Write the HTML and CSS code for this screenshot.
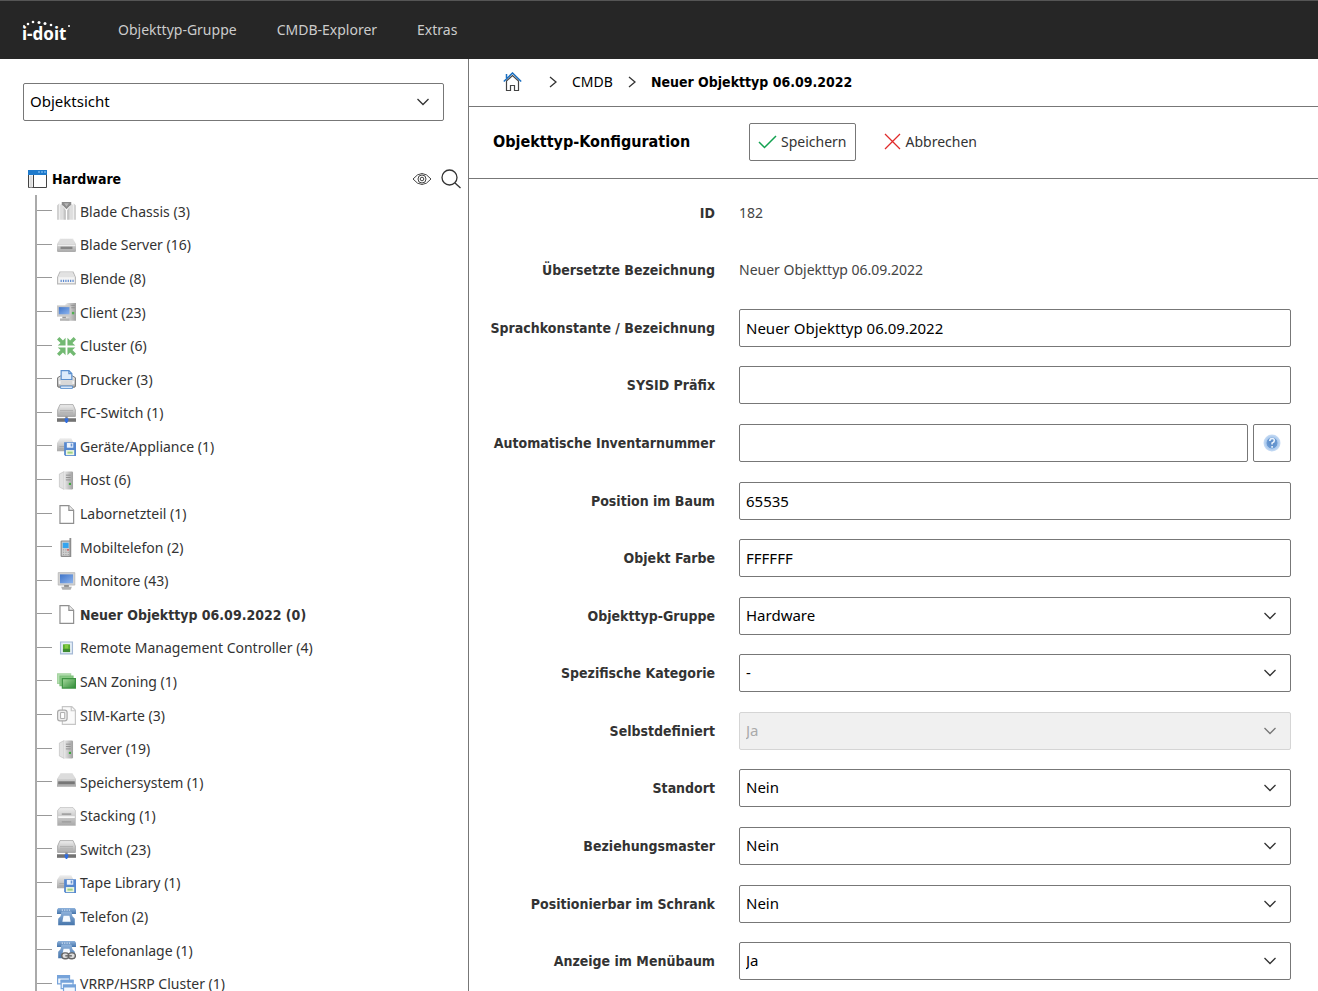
FILE: index.html
```html
<!DOCTYPE html>
<html lang="de">
<head>
    <meta charset="UTF-8">
    <meta name="viewport" content="width=device-width, initial-scale=1.0">
    <title>i-doit - Objekttyp-Konfiguration</title>
    <link rel="stylesheet" href="styles.css">
</head>
<body>
    <!-- icon sprite -->
    <svg class="sprite" width="0" height="0" aria-hidden="true">
        <defs>
            <linearGradient id="g-grey" x1="0" y1="0" x2="0" y2="1"><stop offset="0" stop-color="#efefef"/><stop offset="1" stop-color="#a9a9a9"/></linearGradient>
            <linearGradient id="g-side" x1="0" y1="0" x2="1" y2="0"><stop offset="0" stop-color="#e8e8e8"/><stop offset="1" stop-color="#a0a0a0"/></linearGradient>
            <linearGradient id="g-blue" x1="0" y1="0" x2="1" y2="1"><stop offset="0" stop-color="#3f74c8"/><stop offset="1" stop-color="#8db4ee"/></linearGradient>
            <linearGradient id="g-phone" x1="0" y1="0" x2="0" y2="1"><stop offset="0" stop-color="#8fb3dc"/><stop offset="1" stop-color="#4675ab"/></linearGradient>
            <linearGradient id="g-green" x1="0" y1="0" x2="1" y2="1"><stop offset="0" stop-color="#a9dba0"/><stop offset="1" stop-color="#2e8b35"/></linearGradient>
            <radialGradient id="g-help"><stop offset="0" stop-color="#5687c4"/><stop offset=".6" stop-color="#6c9bd4"/><stop offset=".68" stop-color="#a9c8ec"/><stop offset="1" stop-color="#c9ddf5"/></radialGradient>
        </defs>
        <symbol id="i-chassis" viewBox="0 0 16 16">
            <path d="M0 3l2-2v14H0zM14 1l2 2v12h-2z" fill="#d2d2d2"/>
            <path d="M2.600 2H5v13H2.600zM11 2h2.400v13H11z" fill="#dedede"/>
            <path d="M5.300 4l2.200 3v8H5.300zM10.700 4L8.500 7v8h2.200z" fill="#c4c4c4"/>
            <path d="M4 0h8v2L8 6 4 2z" fill="#8b8b8b"/><path d="M6 1h4L8 4z" fill="#b5b5b5"/>
        </symbol>
        <symbol id="i-blade" viewBox="0 0 16 16">
            <path d="M2.500 2h11L16 7v5.500a1 1 0 0 1-1 1H1a1 1 0 0 1-1-1V7z" fill="url(#g-grey)"/>
            <path d="M3 2.500h10L15 7H1z" fill="#dedede"/><path d="M.5 7.500h15v1H.5z" fill="#eee"/><path d="M3 9h10v2H3z" fill="#858585"/>
        </symbol>
        <symbol id="i-panel" viewBox="0 0 16 16">
            <path d="M2.500 2.500h11L15.500 7v5.500h-15V7z" fill="#f4f4f4" stroke="#b9b9b9"/>
            <path d="M3 3h10l2 4H1z" fill="#e2e2e2"/>
            <path d="M3 10h11" stroke="#5a88cf" stroke-width="2" stroke-dasharray="1 1"/>
        </symbol>
        <symbol id="i-client" viewBox="0 0 16 16">
            <path d="M7 1l2-1h7v15H7z" fill="url(#g-side)"/><path d="M11 2h4M11 4h4" stroke="#888" stroke-width=".7"/><path d="M12.500 7.500h2v2h-2z" fill="#52b052"/>
            <path d="M0 2h12v9.500H0z" fill="#c9c9c9"/><path d="M1.500 3.500h9v6h-9z" fill="url(#g-blue)"/><path d="M4.500 11.500h3V13h-3z" fill="#999"/><path d="M2.500 13h8v2h-8z" fill="#b4b4b4"/>
        </symbol>
        <symbol id="i-cluster" viewBox="0 0 16 16">
            <path id="arrow-in" d="M2 0l3 3L7.200.6V7.200H.6L3 5 0 2z" fill="#72b972"/>
            <use href="#arrow-in" transform="matrix(-1 0 0 1 16 0)"/><use href="#arrow-in" transform="matrix(1 0 0 -1 0 16)"/><use href="#arrow-in" transform="matrix(-1 0 0 -1 16 16)"/>
        </symbol>
        <symbol id="i-printer" viewBox="0 0 16 16">
            <path d="M.5 6.500L3 5h10l2.500 1.500v7a1 1 0 0 1-1 1h-13a1 1 0 0 1-1-1z" fill="url(#g-grey)" stroke="#6d6d6d" stroke-width=".8"/>
            <path d="M3.500.5h6.500L12.500 3v5h-9z" fill="#dcebfb" stroke="#5a8fce"/><path d="M10 .5V3h2.500" fill="none" stroke="#5a8fce"/>
            <path d="M1.500 10.500h13" stroke="#f3f3f3" stroke-width="3"/><path d="M3 9h10v3.500H3z" fill="#d8d8d8"/><path d="M3 13.500h10v2H3z" fill="#e4f0fd" stroke="#5a8fce" stroke-width=".8"/>
        </symbol>
        <symbol id="i-switch" viewBox="0 0 16 16">
            <path d="M2.500.5h11L15.500 5v5.500H.5V5z" fill="url(#g-grey)" stroke="#999" stroke-width=".6"/><path d="M2.500 5.500h11M2.500 7.500h11" stroke="#b2b2b2"/>
            <path d="M0 12h16v3H0z" fill="#737373"/><path d="M7 10.500h2V12H7z" fill="#888"/><path d="M6.500 12h3v2l-1 2h-1l-1-2z" fill="#2f6de0"/>
        </symbol>
        <symbol id="i-floppy" viewBox="0 0 16 16">
            <path d="M2.500 1h9.500L14 5v7H0V5z" fill="url(#g-grey)"/><path d="M2 8h4M2 10h4" stroke="#aaa"/>
            <path d="M6 4.500h10V16H7l-1-1z" fill="#5587cf"/><path d="M8.300 5h5.400v4H8.300z" fill="#eef4fc"/><path d="M11.500 5.500h1.400V8h-1.400z" fill="#6a96d4"/><path d="M7.500 11h7v4.300h-7z" fill="#eef7df"/><path d="M8.800 12.300h4.400V14H8.800z" fill="#9fd084"/>
        </symbol>
        <symbol id="i-tower" viewBox="0 0 16 16">
            <path d="M2 2.500L6 .5v15L2 13.500z" fill="#e2e2e2" stroke="#c3c3c3" stroke-width=".6"/><path d="M6 .5h6.500a1 1 0 0 1 1 1v13a1 1 0 0 1-1 1H6z" fill="url(#g-side)"/>
            <path d="M7.500 3.500h4M7.500 5.500h4M7.500 7.500h4" stroke="#8d8d8d" stroke-width=".8"/><path d="M10 10h1.800v1.800H10z" fill="#3fa63f"/>
        </symbol>
        <symbol id="i-page" viewBox="0 0 16 16">
            <path d="M2.500.500h7.500l4 4v11H2.500z" fill="#fff" stroke="#8f8f8f"/><path d="M10 .5v4h4" fill="#eee" stroke="#8f8f8f"/>
        </symbol>
        <symbol id="i-mobile" viewBox="0 0 16 16">
            <path d="M10.500 0H12v16H4a1 1 0 0 1-1-1V3a1 1 0 0 1 1-1h6.500z" fill="#8d8d8d"/><path d="M4 3h6.500v12H4z" fill="#d0d0d0"/><path d="M4.800 4h5v4.500h-5z" fill="#35a4ee"/><path d="M5 10h5M5 12h5M5 14h5" stroke="#999" stroke-width=".8" stroke-dasharray="1 1"/><path d="M8.500 9.500h1.500v1H8.500z" fill="#d44"/>
        </symbol>
        <symbol id="i-monitor" viewBox="0 0 16 16">
            <path d="M1 .5h14v10.500H1z" fill="#d2d2d2" stroke="#b2b2b2" stroke-width=".6"/><path d="M2.500 2h11v7.500h-11z" fill="url(#g-blue)"/><path d="M6 11h4v2H6z" fill="#8c8c8c"/><path d="M3.500 12.500h9l-1 2.500h-7z" fill="#b2b2b2"/>
        </symbol>
        <symbol id="i-remote" viewBox="0 0 16 16">
            <path d="M3 2.500h10v10H3z" fill="#e8f0fa" stroke="#a4b8d4"/><path d="M5 4.500h6v6.500H5z" fill="#58ab2f"/><path d="M5 8.500h6V11H5z" fill="#3d8a30"/><path d="M6.500 4.500h3V8h-3z" fill="#83cb44"/>
        </symbol>
        <symbol id="i-zoning" viewBox="0 0 16 16">
            <path d="M.5 1.500h11v8H.5z" fill="#b9e1b5" stroke="#a6d4a2"/><path d="M2.500 3.500h11v8h-11z" fill="#8bca86" stroke="#7cc07a"/><path d="M4.500 5.500h11v8h-11z" fill="url(#g-green)" stroke="#3c9241"/>
        </symbol>
        <symbol id="i-sim" viewBox="0 0 16 16">
            <path d="M4.500.5h8l3 3v12h-11z" fill="#fafafa" stroke="#c6c6c6"/><path d="M12 .5V4h3.500" fill="none" stroke="#c6c6c6"/><rect x=".5" y="3.500" width="8" height="9" rx="2" fill="#eee" stroke="#aaa"/><path d="M3 5.500h3.500v5H3z" fill="#fff" stroke="#aaa" stroke-width=".8"/>
        </symbol>
        <symbol id="i-storage" viewBox="0 0 16 16">
            <path d="M3 0h10l3 5v6.500H0V5z" fill="url(#g-grey)"/><path d="M3 .5h10L15 5H1z" fill="#dcdcdc"/><path d="M1 7h14v2.500H1z" fill="#777"/>
        </symbol>
        <symbol id="i-stack" viewBox="0 0 16 16">
            <path d="M2.500.5h11L15.500 3v12.500H.5V3z" fill="url(#g-grey)" stroke="#bbb" stroke-width=".6"/><path d="M1 8.500h14" stroke="#f8f8f8" stroke-width="1.500"/><path d="M4 6h8M4 12.500h8" stroke="#a2a2a2" stroke-width="1.500"/>
        </symbol>
        <symbol id="i-phone" viewBox="0 0 16 16">
            <path d="M1 0h14l1 1.500V5h-4V3.500H4V5H0V1.500z" fill="url(#g-phone)"/><path d="M4 3h8l1 4 2 2v5.500H1V9l2-2z" fill="url(#g-phone)"/><path d="M4 1.800h8" stroke="#d3e3f5" stroke-dasharray="1 1"/><path d="M5.500 6.500h5l1 5h-7z" fill="#f5faff"/>
        </symbol>
        <symbol id="i-pbx" viewBox="0 0 16 16">
            <use href="#i-phone" width="16" height="16"/><rect x="4" y="10" width="6" height="5" rx="2.500" fill="#ddd" stroke="#666" stroke-width="1.200"/><rect x="9.500" y="10" width="6" height="5" rx="2.500" fill="#ddd" stroke="#666" stroke-width="1.200"/><path d="M7 12.500h5.500" stroke="#666" stroke-width="1.200"/>
        </symbol>
        <symbol id="i-windows" viewBox="0 0 16 16">
            <g fill="#f3f8fe" stroke="#76a3da"><path d="M.5.500h10v7H.5z"/><path d="M3.500 4.500h10v7h-10z"/><path d="M5.500 8.500h10v7h-10z"/></g><path d="M0 0h11v3H0zM3 4h11v2.500H3zM5 8h11v2.500H5z" fill="#76a3da"/>
        </symbol>
        <symbol id="i-chevron" viewBox="0 0 8 12"><path d="M1 1l6 5-6 5" fill="none" stroke="#333" stroke-width="1.300"/></symbol>
    </svg>

    <header class="topbar">
        <a href="#" class="logo">
            <svg viewBox="0 0 50 7" fill="#fff" aria-hidden="true">
                <circle cx="2" cy="6" r="1"/><circle cx="6" cy="4" r="1.300"/><circle cx="11" cy="2" r="1.300"/><circle cx="17" cy="2.500" r="1.500"/><circle cx="23" cy="3.500" r="1.500"/><circle cx="29" cy="5" r="1.300"/><circle cx="47" cy="6" r="1"/>
            </svg>
            <span>i-doit</span>
        </a>
        <nav>
            <a href="#">Objekttyp-Gruppe</a>
            <a href="#">CMDB-Explorer</a>
            <a href="#">Extras</a>
        </nav>
    </header>

    <div class="wrapper">
        <aside class="sidebar">
            <select class="field" aria-label="Sicht"><option>Objektsicht</option></select>
            <div class="tree-head">
                <svg class="icon" viewBox="0 0 19 19" aria-hidden="true"><path d="M.5.500h18v17H.5z" fill="#fff" stroke="#444"/><path d="M0 0h19v5H0z" fill="#1f7acb"/><path d="M10 2h2M13 2h2M16 2h2" stroke="#9cd0ff"/><path d="M1.500 5.500h3v12h-3z" fill="#ddd"/><path d="M5.500 5v12.500" stroke="#444"/></svg>
                <h2>Hardware</h2>
                <button class="plain" aria-label="Anzeigen"><svg width="20" height="20" viewBox="0 0 20 20" fill="none" stroke="#444"><path d="M1 10q9-11 18 0-9 11-18 0z"/><circle cx="10" cy="10" r="4"/><circle cx="10" cy="10" r="1.800"/></svg></button>
                <button class="plain" aria-label="Suchen"><svg width="20" height="20" viewBox="0 0 20 20" fill="none" stroke="#333" stroke-width="1.300"><circle cx="8.500" cy="8.500" r="7.500"/><path d="M14 14l5.500 5"/></svg></button>
            </div>
            <ul class="tree">
                <li><a href="#"><svg class="icon"><use href="#i-chassis"/></svg>Blade Chassis (3)</a></li>
                <li><a href="#"><svg class="icon"><use href="#i-blade"/></svg>Blade Server (16)</a></li>
                <li><a href="#"><svg class="icon"><use href="#i-panel"/></svg>Blende (8)</a></li>
                <li><a href="#"><svg class="icon"><use href="#i-client"/></svg>Client (23)</a></li>
                <li><a href="#"><svg class="icon"><use href="#i-cluster"/></svg>Cluster (6)</a></li>
                <li><a href="#"><svg class="icon"><use href="#i-printer"/></svg>Drucker (3)</a></li>
                <li><a href="#"><svg class="icon"><use href="#i-switch"/></svg>FC-Switch (1)</a></li>
                <li><a href="#"><svg class="icon"><use href="#i-floppy"/></svg>Geräte/Appliance (1)</a></li>
                <li><a href="#"><svg class="icon"><use href="#i-tower"/></svg>Host (6)</a></li>
                <li><a href="#"><svg class="icon"><use href="#i-page"/></svg>Labornetzteil (1)</a></li>
                <li><a href="#"><svg class="icon"><use href="#i-mobile"/></svg>Mobiltelefon (2)</a></li>
                <li><a href="#"><svg class="icon"><use href="#i-monitor"/></svg>Monitore (43)</a></li>
                <li class="active"><a href="#"><svg class="icon"><use href="#i-page"/></svg>Neuer Objekttyp 06.09.2022 (0)</a></li>
                <li><a href="#"><svg class="icon"><use href="#i-remote"/></svg>Remote Management Controller (4)</a></li>
                <li><a href="#"><svg class="icon"><use href="#i-zoning"/></svg>SAN Zoning (1)</a></li>
                <li><a href="#"><svg class="icon"><use href="#i-sim"/></svg>SIM-Karte (3)</a></li>
                <li><a href="#"><svg class="icon"><use href="#i-tower"/></svg>Server (19)</a></li>
                <li><a href="#"><svg class="icon"><use href="#i-storage"/></svg>Speichersystem (1)</a></li>
                <li><a href="#"><svg class="icon"><use href="#i-stack"/></svg>Stacking (1)</a></li>
                <li><a href="#"><svg class="icon"><use href="#i-switch"/></svg>Switch (23)</a></li>
                <li><a href="#"><svg class="icon"><use href="#i-floppy"/></svg>Tape Library (1)</a></li>
                <li><a href="#"><svg class="icon"><use href="#i-phone"/></svg>Telefon (2)</a></li>
                <li><a href="#"><svg class="icon"><use href="#i-pbx"/></svg>Telefonanlage (1)</a></li>
                <li><a href="#"><svg class="icon"><use href="#i-windows"/></svg>VRRP/HSRP Cluster (1)</a></li>
            </ul>
        </aside>

        <main>
            <nav class="breadcrumb">
                <a href="#" class="home" aria-label="Start"><svg class="icon" viewBox="0 0 19 19" fill="none"><path d="M3.500 9v9.500h4v-5h4v5h4V9l-6-5.500z" stroke="#444" stroke-width="1.200"/><path d="M.8 9.500l8.700-8.500 8.700 8.500M3.500 6V2" stroke="#1b6fc0" stroke-width="1.500"/></svg></a>
                <svg class="sep"><use href="#i-chevron"/></svg>
                <a href="#">CMDB</a>
                <svg class="sep"><use href="#i-chevron"/></svg>
                <strong>Neuer Objekttyp 06.09.2022</strong>
            </nav>
            <div class="toolbar">
                <h1>Objekttyp-Konfiguration</h1>
                <button class="btn save"><svg class="icon" viewBox="0 0 19 19" fill="none" stroke="#12a150" stroke-width="1.500"><path d="M1 10l5.500 5.500L18 4"/></svg>Speichern</button>
                <button class="btn cancel"><svg class="icon" viewBox="0 0 19 19" fill="none" stroke="#e02b2b" stroke-width="1.300"><path d="M2 2l15 15M17 2L2 17"/></svg>Abbrechen</button>
            </div>
            <form class="form">
                <div class="row"><span class="label">ID</span><span class="value">182</span></div>
                <div class="row"><span class="label">Übersetzte Bezeichnung</span><span class="value">Neuer Objekttyp 06.09.2022</span></div>
                <div class="row"><label for="title">Sprachkonstante / Bezeichnung</label><input class="field" type="text" id="title" value="Neuer Objekttyp 06.09.2022"></div>
                <div class="row"><label for="sysid">SYSID Präfix</label><input class="field" type="text" id="sysid"></div>
                <div class="row">
                    <label for="inventory">Automatische Inventarnummer</label>
                    <div class="group">
                        <input class="field" type="text" id="inventory">
                        <button type="button" class="help" aria-label="Hilfe"><svg width="18" height="18" viewBox="0 0 18 18"><circle cx="9" cy="9" r="8.500" fill="url(#g-help)"/><path d="M6.800 7q0-2.500 2.300-2.500T11.300 6.700q0 1.300-2.200 2.300v1.500M9.100 12v1.800" fill="none" stroke="#eaf2fc" stroke-width="1.600"/></svg></button>
                    </div>
                </div>
                <div class="row"><label for="position">Position im Baum</label><input class="field" type="text" id="position" value="65535"></div>
                <div class="row"><label for="color">Objekt Farbe</label><input class="field" type="text" id="color" value="FFFFFF"></div>
                <div class="row"><label for="group">Objekttyp-Gruppe</label><select class="field" id="group"><option>Hardware</option></select></div>
                <div class="row"><label for="category">Spezifische Kategorie</label><select class="field" id="category"><option>-</option></select></div>
                <div class="row"><label for="custom">Selbstdefiniert</label><select class="field" id="custom" disabled><option>Ja</option><option>Nein</option></select></div>
                <div class="row"><label for="location">Standort</label><select class="field" id="location"><option>Nein</option><option>Ja</option></select></div>
                <div class="row"><label for="relation">Beziehungsmaster</label><select class="field" id="relation"><option>Nein</option><option>Ja</option></select></div>
                <div class="row"><label for="rack">Positionierbar im Schrank</label><select class="field" id="rack"><option>Nein</option><option>Ja</option></select></div>
                <div class="row"><label for="menu">Anzeige im Menübaum</label><select class="field" id="menu"><option>Ja</option><option>Nein</option></select></div>
            </form>
        </main>
    </div>
</body>
</html>
```
FILE: styles.css
```css
*{
    box-sizing: border-box;
}
body{
    margin: 0;
    height: 100vh;
    display: flex;
    flex-direction: column;
    overflow: hidden;
    background-color: #fff;
    color: #333;
    font-family: "Noto Sans", "Open Sans", sans-serif;
    font-size: 14px;
    line-height: 20px;
}
a{
    color: inherit;
    text-decoration: none;
}
h1, h2{
    margin: 0;
    color: #000;
}
h1, h2, strong, label, .label, .active{
    font-family: "DejaVu Sans Condensed", "Noto Sans", sans-serif;
    font-weight: bold;
}
button, input, select{
    font-family: inherit;
    font-size: 14px;
    color: inherit;
}
.sprite{
    position: absolute;
}
.icon{
    width: 19px;
    height: 19px;
    flex: none;
}

/* top bar */
.topbar{
    flex: none;
    height: 59px;
    display: flex;
    align-items: center;
    padding-left: 22px;
    background-color: #262626;
    border-top: 1px solid #555;
}
.logo{
    width: 96px;
    display: flex;
    flex-direction: column;
    color: #fff;
    font-size: 17px;
    font-weight: bold;
    line-height: 14px;
}
.logo svg{
    width: 50px;
    height: 7px;
}
.topbar nav{
    display: flex;
    gap: 40px;
    color: #ccc;
}

.wrapper{
    flex: 1;
    min-height: 0;
    display: flex;
}

/* object tree */
.sidebar{
    width: 469px;
    flex: none;
    padding-top: 24px;
    overflow: auto;
    scrollbar-width: none;
    border-right: 1px solid #777;
}
.sidebar .field{
    display: block;
    width: auto;
    min-width: 421px;
    margin-left: 23px;
}
.tree-head{
    display: flex;
    align-items: center;
    gap: 5px;
    height: 20px;
    margin: 48px 7px 6px 28px;
}
.tree-head h2{
    flex: 1;
    font-size: 14px;
}
.plain{
    display: flex;
    padding: 0;
    margin-left: 4px;
    border: none;
    background: none;
}
.tree{
    list-style: none;
    display: grid;
    grid-auto-rows: 1fr;
    min-height: 806px;
    margin: 0 0 0 35px;
    padding: 0;
    border-left: 2px solid #aaa;
}
.tree li{
    display: flex;
    align-items: center;
}
.tree li::before{
    content: "";
    width: 15px;
    border-top: 1px solid #999;
    margin: 0 5px 2px 0;
}
.tree a{
    display: flex;
    align-items: center;
    gap: 4px;
}

/* content */
main{
    flex: 1;
    min-width: 0;
    overflow: auto;
    scrollbar-width: none;
}
.breadcrumb{
    display: flex;
    align-items: center;
    height: 48px;
    padding: 0 34px 2px;
    border-bottom: 1px solid #777;
    color: #000;
}
.home{
    display: flex;
    margin-right: 12px;
}
.sep{
    width: 8px;
    height: 12px;
    margin: 0 15px;
}
.toolbar{
    display: flex;
    align-items: center;
    height: 72px;
    padding: 0 24px 2px;
    border-bottom: 1px solid #777;
}
h1{
    width: 256px;
    font-size: 16px;
}
.btn{
    display: flex;
    align-items: center;
    gap: 4px;
    height: 38px;
    padding: 0 8px;
    background-color: #fff;
    border: 1px solid #777;
    border-radius: 2px;
}
.cancel{
    margin-left: 18px;
    border-color: transparent;
}
.form{
    display: grid;
    grid-auto-rows: 1fr;
    min-height: 811px;
    padding: 5px 27px 0 0;
}
.row{
    display: grid;
    grid-template-columns: 246px 1fr;
    gap: 24px;
    align-items: center;
}
.row label, .label{
    text-align: right;
    white-space: nowrap;
}
.value{
    color: #444;
}
.field{
    width: 100%;
    height: 38px;
    padding: 0 6px;
    font-size: 15px;
    color: #000;
    background-color: #fff;
    border: 1px solid #777;
    border-radius: 2px;
}
select.field{
    appearance: none;
    padding-bottom: 2px;
    background-image: url("data:image/svg+xml,%3Csvg xmlns='http://www.w3.org/2000/svg' width='12' height='8' fill='none' stroke='%23333' stroke-width='1.300'%3E%3Cpath d='M.5 1L6 6.500 11.500 1'/%3E%3C/svg%3E");
    background-repeat: no-repeat;
    background-position: right 14px center;
}
select.field:disabled{
    color: #aaa;
    opacity: 1;
    background-color: #f0f0f0;
    background-image: url("data:image/svg+xml,%3Csvg xmlns='http://www.w3.org/2000/svg' width='12' height='8' fill='none' stroke='%23777' stroke-width='1.300'%3E%3Cpath d='M.5 1L6 6.500 11.500 1'/%3E%3C/svg%3E");
    border-color: #d5d5d5;
}
.group{
    display: flex;
    gap: 5px;
}
.help{
    flex: none;
    width: 38px;
    height: 38px;
    display: flex;
    align-items: center;
    justify-content: center;
    padding: 0;
    background-color: #fff;
    border: 1px solid #777;
    border-radius: 2px;
}
```
